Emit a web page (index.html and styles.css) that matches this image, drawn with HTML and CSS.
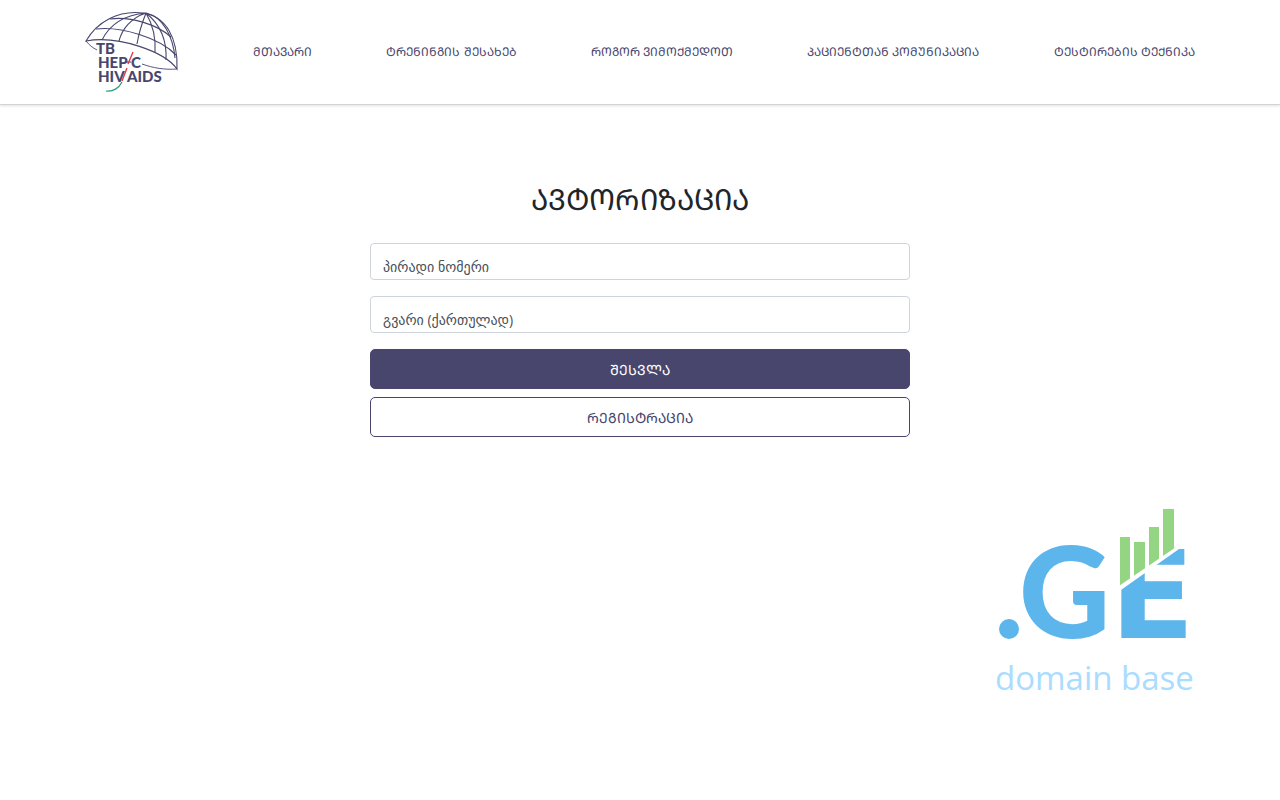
FILE: index.html
```html
<!DOCTYPE html>
<html lang="ka">
<head>
    <meta charset="UTF-8">
    <meta name="viewport" content="width=device-width, initial-scale=1.0">
    <title>ავტორიზაცია</title>
    <link rel="stylesheet" href="styles.css">
</head>
<body>
    <header class="header">
        <nav class="container navbar">
            <a class="brand" href="#" aria-label="TB / HEP-C / HIV/AIDS">
                <svg width="94" height="82" viewBox="0 0 94 82" fill="none" stroke="#48466d" stroke-width="1.1">
                    <path d="M1 30C12 11 33-1 58 2C81 5 93 27 92 58C80 41 34 24 1 30Z"/>
                    <path d="M11 18C36 15 75 27 91 44M25 8C46 5 73 14 86 26"/>
                    <path d="M61 2C38 4 24 15 17 29M61 2C46 7 37 18 34 30M61 2C57 12 54 21 52 33M61 2C68 14 71 25 70 41M61 2C76 14 82 30 81 49M61 2C78 6 88 25 90 47"/>
                    <path d="M1 30C4 34 8 37 12 39M57 53C68 57 80 59 92 58" stroke-width="0.9"/>
                    <g class="brand-text">
                        <text x="11" y="43">TB</text>
                        <text x="13" y="57">HEP</text>
                        <text x="46" y="57">C</text>
                        <text x="13" y="71">HIV</text>
                        <text x="42" y="71">AIDS</text>
                    </g>
                    <path d="M41 51H46"/>
                    <path d="M48 41L43 53M42 57L37 70" stroke="#e23b4b" stroke-width="1.4"/>
                    <path d="M37 71C34 77 28 81 21 80" stroke="#279b79" stroke-width="1.2"/>
                </svg>
            </a>
            <a class="nav-link" href="#">ᲛᲗᲐᲕᲐᲠᲘ</a>
            <a class="nav-link" href="#">ᲢᲠᲔᲜᲘᲜᲒᲘᲡ ᲨᲔᲡᲐᲮᲔᲑ</a>
            <a class="nav-link" href="#">ᲠᲝᲒᲝᲠ ᲕᲘᲛᲝᲥᲛᲔᲓᲝᲗ</a>
            <a class="nav-link" href="#">ᲞᲐᲪᲘᲔᲜᲢᲗᲐᲜ ᲙᲝᲛᲣᲜᲘᲙᲐᲪᲘᲐ</a>
            <a class="nav-link" href="#">ᲢᲔᲡᲢᲘᲠᲔᲑᲘᲡ ᲢᲔᲥᲜᲘᲙᲐ</a>
        </nav>
    </header>

    <main class="container">
        <form class="login">
            <h1 class="title">ᲐᲕᲢᲝᲠᲘᲖᲐᲪᲘᲐ</h1>
            <input class="field" type="text" placeholder="პირადი ნომერი" aria-label="პირადი ნომერი">
            <input class="field" type="text" placeholder="გვარი (ქართულად)" aria-label="გვარი (ქართულად)">
            <button class="btn btn-primary" type="submit">ᲨᲔᲡᲕᲚᲐ</button>
            <button class="btn btn-outline" type="button">ᲠᲔᲒᲘᲡᲢᲠᲐᲪᲘᲐ</button>
        </form>
    </main>

    <footer class="container footer">
        <a class="domain" href="#" aria-label=".GE domain base">
            <svg width="200" height="192" viewBox="0 0 200 192">
                <clipPath id="upper"><path d="M118 0H190V37L118 86Z"/></clipPath>
                <clipPath id="lower"><path d="M116 93L184 45H200V140H116Z"/></clipPath>
                <circle cx="14" cy="125" r="10" fill="#5cb5eb"/>
                <text class="domain-g" x="24" y="134">G</text>
                <g clip-path="url(#lower)"><text class="domain-e" x="115" y="134">E</text></g>
                <g clip-path="url(#upper)" fill="#93d583">
                    <rect x="125" y="33" width="10" height="60"/>
                    <rect x="139" y="38" width="11" height="50"/>
                    <rect x="154" y="23" width="10" height="50"/>
                    <rect x="168" y="5" width="11" height="60"/>
                </g>
                <text class="domain-name" x="0" y="186">domain base</text>
            </svg>
        </a>
    </footer>
</body>
</html>
```
FILE: styles.css
```css
* {
    box-sizing: border-box;
}
body {
    margin: 0;
    font-family: "DejaVu Sans Condensed", "DejaVu Sans", sans-serif;
    color: #212529;
    background: #fff;
}
.container {
    max-width: 1140px;
    margin: 0 auto;
    padding: 0 15px;
}
.header {
    border-bottom: 1px solid #d3d3d6;
    box-shadow: 0 1px 3px rgba(0, 0, 0, 0.12);
}
.navbar {
    display: flex;
    justify-content: space-between;
    align-items: center;
    padding-top: 11px;
    padding-bottom: 11px;
}
.brand svg,
.domain svg {
    display: block;
    overflow: visible;
}
.brand-text {
    font: 900 15px Lato, sans-serif;
    fill: #48466d;
    stroke: none;
}
.nav-link {
    font-size: 12px;
    line-height: 20px;
    color: #48466d;
    text-decoration: none;
    white-space: nowrap;
}
.login {
    display: flex;
    flex-direction: column;
    max-width: 540px;
    margin: 72px auto 0;
}
.title {
    margin: 0 0 20px;
    font-size: 29px;
    font-weight: 200;
    line-height: 46px;
    text-align: center;
}
.field {
    height: 37px;
    margin-bottom: 16px;
    padding: 10px 12px 0;
    font-family: "Open Sans", "DejaVu Sans", sans-serif;
    font-size: 14px;
    border: 1px solid #ced4da;
    border-radius: 4px;
    background: #fff;
}
.field::placeholder {
    color: #495057;
}
.btn {
    height: 40px;
    margin-bottom: 8px;
    font-family: inherit;
    font-size: 14px;
    border: 1px solid #48466d;
    border-radius: 5px;
    cursor: pointer;
}
.btn-primary {
    color: #fff;
    background: #48466d;
}
.btn-outline {
    color: #48466d;
    background: #fff;
}
.footer {
    display: flex;
    justify-content: flex-end;
    margin-top: 59px;
}
.domain-g {
    font: 900 126px Lato, sans-serif;
    fill: #5cb5eb;
}
.domain-e {
    font: bold 124px "DejaVu Sans", sans-serif;
    fill: #5cb5eb;
}
.domain-name {
    font: 33px "Open Sans", sans-serif;
    fill: #aadcff;
}
```
